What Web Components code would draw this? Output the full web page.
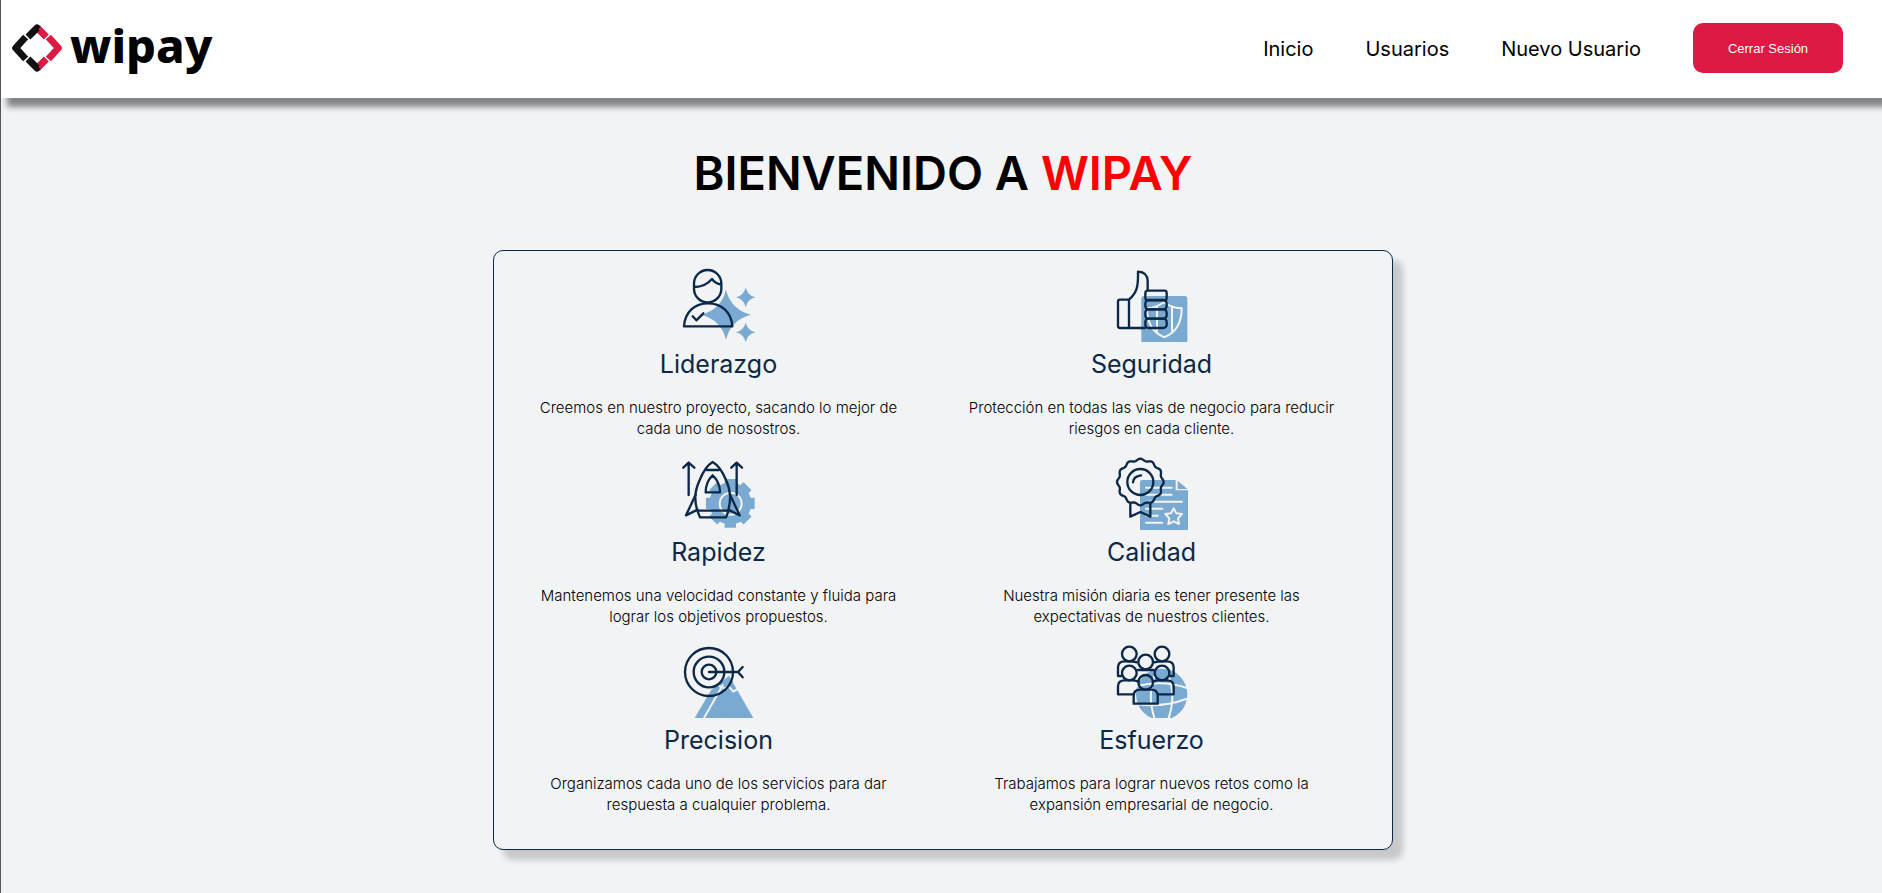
<!DOCTYPE html>
<html lang="es">
<head>
<meta charset="utf-8">
<title>Wipay</title>
<style>
  body { margin: 0; background: #f1f3f5; font-family: Inter, "Liberation Sans", sans-serif; color: #000; }
</style>
</head>
<body>
<wipay-page>
  <wipay-header slot="header">
    <wipay-link href="#inicio">Inicio</wipay-link>
    <wipay-link href="#usuarios">Usuarios</wipay-link>
    <wipay-link href="#nuevo">Nuevo Usuario</wipay-link>
    <wipay-button>Cerrar Sesión</wipay-button>
  </wipay-header>
  <wipay-title>BIENVENIDO A <span slot="brand">WIPAY</span></wipay-title>
  <wipay-values>
    <wipay-value icon="leader" name="Liderazgo">Creemos en nuestro proyecto, sacando lo mejor de cada uno de nosostros.</wipay-value>
    <wipay-value icon="security" name="Seguridad">Protección en todas las vias de negocio para reducir riesgos en cada cliente.</wipay-value>
    <wipay-value icon="speed" name="Rapidez">Mantenemos una velocidad constante y fluida para lograr los objetivos propuestos.</wipay-value>
    <wipay-value icon="quality" name="Calidad">Nuestra misión diaria es tener presente las expectativas de nuestros clientes.</wipay-value>
    <wipay-value icon="precision" name="Precision">Organizamos cada uno de los servicios para dar respuesta a cualquier problema.</wipay-value>
    <wipay-value icon="effort" name="Esfuerzo">Trabajamos para lograr nuevos retos como la expansión empresarial de negocio.</wipay-value>
  </wipay-values>
</wipay-page>

<script>
const define = (tag, render) => customElements.define(tag, class extends HTMLElement {
  constructor() {
    super();
    this.attachShadow({ mode: 'open' });
  }
  connectedCallback() {
    this.shadowRoot.innerHTML = render(this);
  }
});

// Each icon: [viewBox, markup]. Class b = solid blue, w = light line, n = navy line.
const star = (x, y, r, k) =>
  `<path class="b" d="M${x} ${y - r}Q${x + k} ${y - k} ${x + r} ${y}Q${x + k} ${y + k} ${x} ${y + r}Q${x - k} ${y + k} ${x - r} ${y}Q${x - k} ${y - k} ${x} ${y - r}Z"/>`;

const gear = (() => {
  let d = '';
  for (let i = 0; i < 8; i++) {
    d += `<rect class="b" x="164" y="102" width="34" height="40" rx="2" transform="rotate(${i * 45} 181 175)"/>`;
  }
  return d + '<circle class="b" cx="181" cy="175" r="63"/>';
})();

const rosette = (() => {
  const points = [];
  for (let i = 0; i <= 144; i++) {
    const a = i * Math.PI / 72;
    const r = 67 + 3 * Math.cos(12 * a);
    points.push((121 + r * Math.sin(a)).toFixed(1) + ' ' + (111 - r * Math.cos(a)).toFixed(1));
  }
  return `<path class="n" d="M${points.join('L')}Z"/>`;
})();

const person = (x, y, w) =>
  `<circle class="n" cx="${x}" cy="${y}" r="22"/><path class="n" d="M${x - w} ${y + 64}v-24q0-18 20-18h${2 * w - 40}q20 0 20 18v24z"/>`;

const icons = {
  leader: ['36 39 222 222', `
    ${star(168, 179, 75, 15)}${star(227, 127, 29, 6)}${star(227, 232, 29, 6)}
    <path class="n" d="M72 86a41 41 0 0 1 82 0v15a41 41 0 0 1-82 0zM73 96q32 0 53-24 10 14 28 17"/>
    <path class="n" d="M42 214C45 171 74 145 114 145s70 26 73 69zM68 184l11 12 21-21"/>`],
  security: ['45 39 222 222', `
    <rect class="b" x="124" y="123" width="138" height="141" rx="8"/>
    <path class="w" d="M192 141q18 17 53 19c0 47-17 73-52 87-35-14-52-40-52-87 25-2 38-9 51-19zM171 154v74M216 154v73"/>
    <path class="n" d="M87 134H60q-6 0-6 6v73q0 6 6 6h27zM87 219h48M87 134c24-21 28-39 27-84 21 1 29 13 29 29v28M143 107h51q6 0 6 7v15q0 7-6 7h-49q-9 0-9-8v-13q0-8 7-8z"/>
    <rect class="n" x="136" y="135" width="64" height="28" rx="10"/>
    <rect class="n" x="136" y="163" width="64" height="28" rx="10"/>
    <rect class="n" x="136" y="191" width="64" height="28" rx="10"/>`],
  speed: ['36 33 222 222', `
    ${gear}
    <circle class="w" cx="182" cy="176" r="33"/>
    <path class="n" d="M56 150V53M40 68l16-15 17 15M200 150V53M184 68l16-15 16 15"/>
    <path class="n" d="M128 51c19 11 31 32 40 54 15 34 15 57 7 92H82c-10-35-8-58 7-92 9-22 20-43 39-54zM110 75h37M128 91c12 11 22 30 22 51h-43c0-21 9-40 21-51zM82 197l8 20h78l8-20"/>
    <path class="n" d="M77 149l-29 62 35-17M180 149l29 62-34-17"/>`],
  quality: ['45 33 222 222', `
    <path class="b" d="M128 105h99v31h37v116q0 6-6 6H126q-6 0-6-6V112q0-7 8-7zM233 107l29 25h-29z"/>
    <path class="w" d="M138 128h77M138 149h77M138 170h108M138 191h49M138 212h35M138 233h49"/>
    <path class="w" d="M221 190l8 15 17 2-12 13 3 17-16-8-16 8 3-17-12-13 17-2z"/>
    <path class="n" d="M91 175v40l30-14 30 14v-40"/>
    ${rosette}
    <circle class="n" cx="121" cy="111" r="39"/>
    <path class="n" d="M99 112q1-18 24-21"/>`],
  precision: ['36 27 222 222', `
    <path class="b" d="M177 122l73 127H74l50-85z"/>
    <path class="w" d="M102 249l56-98M149 154l17 7 10-7 14 16 15-9"/>
    <path class="n" d="M117 111h87M218 96l-14 15 14 16"/>
    <circle class="n" cx="117" cy="111" r="72"/>
    <circle class="n" cx="117" cy="111" r="46"/>
    <circle class="n" cx="117" cy="111" r="22"/>`],
  effort: ['45 27 222 222', `
    <circle class="b" cx="185" cy="178" r="77"/>
    <path class="w" d="M110 154q75-20 151 5M112 208q75 10 147-16M164 252q-23-70 0-130M205 252q24-70 0-130"/>
    <path class="n" d="M110 82q-7-3-36-3-20 0-20 18v26h12M164 82q7-3 36-3 21 0 21 18v26h-12M114 105h46"/>
    <circle class="n" cx="88" cy="57" r="22"/>
    <circle class="n" cx="186" cy="57" r="22"/>
    <circle class="n" cx="137" cy="81" r="22"/>
    <circle class="n" cx="88" cy="114" r="22"/>
    <circle class="n" cx="186" cy="114" r="22"/>
    <path class="n" d="M102 178H54v-24q0-18 20-18h28l14 4M174 178h47v-24q0-18-21-18h-28l-14 4"/>
    ${person(137, 142, 36)}`]
};

define('wipay-page', () => `
  <style>
    :host { display: block; min-height: 100vh; border-left: 1px solid #55565a; box-sizing: border-box; }
    main { padding: 39px 0 43px 3px; }
  </style>
  <slot name="header"></slot>
  <main><slot></slot></main>`);

define('wipay-header', () => `
  <style>
    :host { display: flex; align-items: center; justify-content: space-between; box-sizing: border-box;
      height: 98px; padding: 0 39px 2px 11px; background: #fff; box-shadow: 6px 9px 6px rgba(0, 0, 0, .45); }
    .logo { display: flex; align-items: center; gap: 8px; color: #000; text-decoration: none;
      font: 800 47px/44px "Noto Sans", sans-serif; }
    .logo span { padding-bottom: 6px; }
    svg { width: 50px; height: 50px; fill: none; stroke-width: 21; stroke-linejoin: round; }
    nav { display: flex; align-items: center; gap: 52px; }
    .k { stroke: #111; } .r { stroke: #dc1a43; }
  </style>
  <a class="logo" href="#inicio">
    <svg viewBox="0 0 150 150" aria-hidden="true">
      <path class="r" d="M76 15l27 27M76 135l27-27M109 42l30 33-30 33"/>
      <path class="k" d="M48 42l27-27 4 4M48 108l27 27 4-4M41 42L11 75l30 33"/>
    </svg><span>wipay</span>
  </a>
  <nav><slot></slot></nav>`);

define('wipay-link', el => `
  <style>
    :host { display: block; }
    a { display: block; padding-top: 2px; color: #000; text-decoration: none; font-size: 20px; line-height: 28px; }
  </style>
  <a href="${el.getAttribute('href')}"><slot></slot></a>`);

define('wipay-button', () => `
  <style>
    :host { display: block; }
    button { width: 150px; height: 50px; border: 0; border-radius: 10px; background: #dc1a43; color: #fff;
      font: 13px "Liberation Sans", Arial, sans-serif; cursor: pointer; }
  </style>
  <button type="button"><slot></slot></button>`);

define('wipay-title', () => `
  <style>
    :host { display: block; }
    h1 { margin: 0 0 41px; text-align: center; font: 600 47px/72px Inter, sans-serif; }
    ::slotted(span) { color: #f00; }
  </style>
  <h1><slot></slot><slot name="brand"></slot></h1>`);

define('wipay-values', () => `
  <style>
    :host { display: grid; grid-template-columns: 1fr 1fr; align-content: start; box-sizing: border-box;
      max-width: 900px; min-height: 600px; margin: 0 auto; padding: 17px 24px 0 8px;
      border: 1px solid #0b2849; border-radius: 10px; box-shadow: 10px 10px 6px rgba(0, 0, 0, .18); }
  </style>
  <slot></slot>`);

define('wipay-value', el => {
  const [box, art] = icons[el.getAttribute('icon')];
  return `
  <style>
    :host { display: block; padding: 0 28px 17px; text-align: center; }
    svg { display: block; width: 74px; height: 74px; margin: 0 auto 5px; }
    .b { fill: #7aaad1; }
    .w { fill: none; stroke: #f1f3f5; stroke-width: 6; stroke-linecap: round; stroke-linejoin: round; }
    .n { fill: none; stroke: #0b2849; stroke-width: 7; stroke-linecap: round; stroke-linejoin: round; }
    h2 { margin: 0 0 16px; color: #0b2849; font-weight: 400; font-size: 25px; line-height: 34px; }
    p { margin: 0; font-weight: 300; font-size: 15px; line-height: 21px; }
  </style>
  <svg viewBox="${box}" aria-hidden="true">${art}</svg>
  <h2>${el.getAttribute('name')}</h2>
  <p><slot></slot></p>`;
});
</script>
</body>
</html>
